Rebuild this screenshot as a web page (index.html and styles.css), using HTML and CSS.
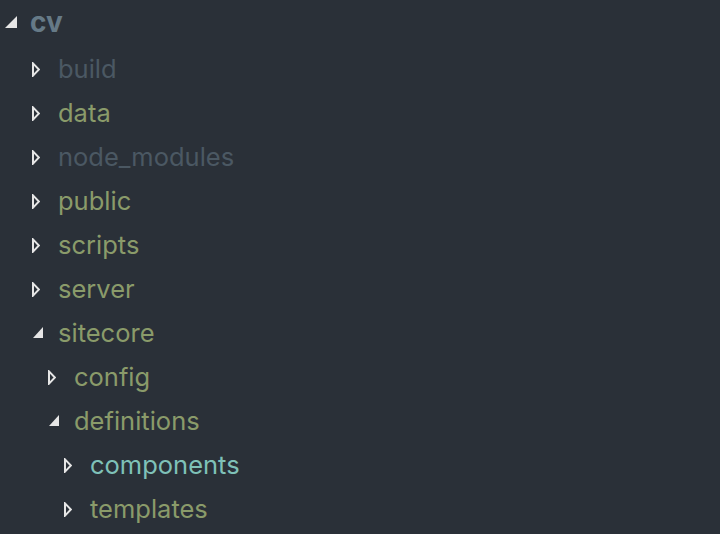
FILE: index.html
```html
<!DOCTYPE html>
<html>
<head>
<meta charset="utf-8">
<link rel="stylesheet" href="styles.css">
</head>
<body>
<div class="tree">
  <div class="row root">
    <svg class="arrow big" viewBox="0 0 12 12" width="12" height="12"><polygon points="12,0 12,12 0,12" /></svg>
    <span class="label root-label">cv</span>
  </div>
  <div class="children l1">
    <div class="row"><svg class="arrow closed" viewBox="0 0 8 15" width="8" height="15"><polygon class="open-tri" points="1,1.4 6.9,7.5 1,13.6" /></svg><span class="label dim">build</span></div>
    <div class="row"><svg class="arrow closed" viewBox="0 0 8 15" width="8" height="15"><polygon class="open-tri" points="1,1.4 6.9,7.5 1,13.6" /></svg><span class="label">data</span></div>
    <div class="row"><svg class="arrow closed" viewBox="0 0 8 15" width="8" height="15"><polygon class="open-tri" points="1,1.4 6.9,7.5 1,13.6" /></svg><span class="label dim">node_modules</span></div>
    <div class="row"><svg class="arrow closed" viewBox="0 0 8 15" width="8" height="15"><polygon class="open-tri" points="1,1.4 6.9,7.5 1,13.6" /></svg><span class="label">public</span></div>
    <div class="row"><svg class="arrow closed" viewBox="0 0 8 15" width="8" height="15"><polygon class="open-tri" points="1,1.4 6.9,7.5 1,13.6" /></svg><span class="label">scripts</span></div>
    <div class="row"><svg class="arrow closed" viewBox="0 0 8 15" width="8" height="15"><polygon class="open-tri" points="1,1.4 6.9,7.5 1,13.6" /></svg><span class="label">server</span></div>
    <div class="row"><svg class="arrow open" viewBox="0 0 10 11" width="10" height="11"><polygon points="10,0 10,11 0,11" /></svg><span class="label">sitecore</span></div>
    <div class="children">
      <div class="row"><svg class="arrow closed" viewBox="0 0 8 15" width="8" height="15"><polygon class="open-tri" points="1,1.4 6.9,7.5 1,13.6" /></svg><span class="label">config</span></div>
      <div class="row"><svg class="arrow open" viewBox="0 0 10 11" width="10" height="11"><polygon points="10,0 10,11 0,11" /></svg><span class="label">definitions</span></div>
      <div class="children">
        <div class="row"><svg class="arrow closed" viewBox="0 0 8 15" width="8" height="15"><polygon class="open-tri" points="1,1.4 6.9,7.5 1,13.6" /></svg><span class="label teal">components</span></div>
        <div class="row"><svg class="arrow closed" viewBox="0 0 8 15" width="8" height="15"><polygon class="open-tri" points="1,1.4 6.9,7.5 1,13.6" /></svg><span class="label">templates</span></div>
      </div>
    </div>
  </div>
</div>
</body>
</html>
```

FILE: styles.css
```css
html, body {
  margin: 0;
  padding: 0;
  background: #2a3038;
  width: 720px;
  height: 534px;
  overflow: hidden;
}

.tree {
  font-family: Inter, "Liberation Sans", sans-serif;
  font-size: 25.5px;
  color: #8a9b6a;
}

.row {
  display: flex;
  align-items: center;
  height: 44px;
}

.root {
  height: 44px;
  padding-left: 5px;
}

.children {
  padding-left: 16px;
}

.children.l1 {
  padding-left: 32px;
  margin-top: 3px;
}

.arrow {
  flex: none;
  fill: #e6e6e6;
}

.arrow .open-tri {
  fill: none;
  stroke: #e6e6e6;
  stroke-width: 2;
  stroke-linejoin: miter;
}

.arrow.closed {
  margin-right: 18px;
  margin-top: 0;
}

.arrow.open {
  margin-left: 1px;
  margin-right: 15px;
  margin-top: -1px;
}

.root .arrow {
  margin-right: 13px;
  margin-top: -1px;
}

.label {
  white-space: nowrap;
  line-height: 1;
}

.root-label {
  font-weight: 700;
  color: #667a87;
  font-size: 28px;
}

.dim {
  color: #4b5863;
}

.teal {
  color: #7fc1b8;
}
```
